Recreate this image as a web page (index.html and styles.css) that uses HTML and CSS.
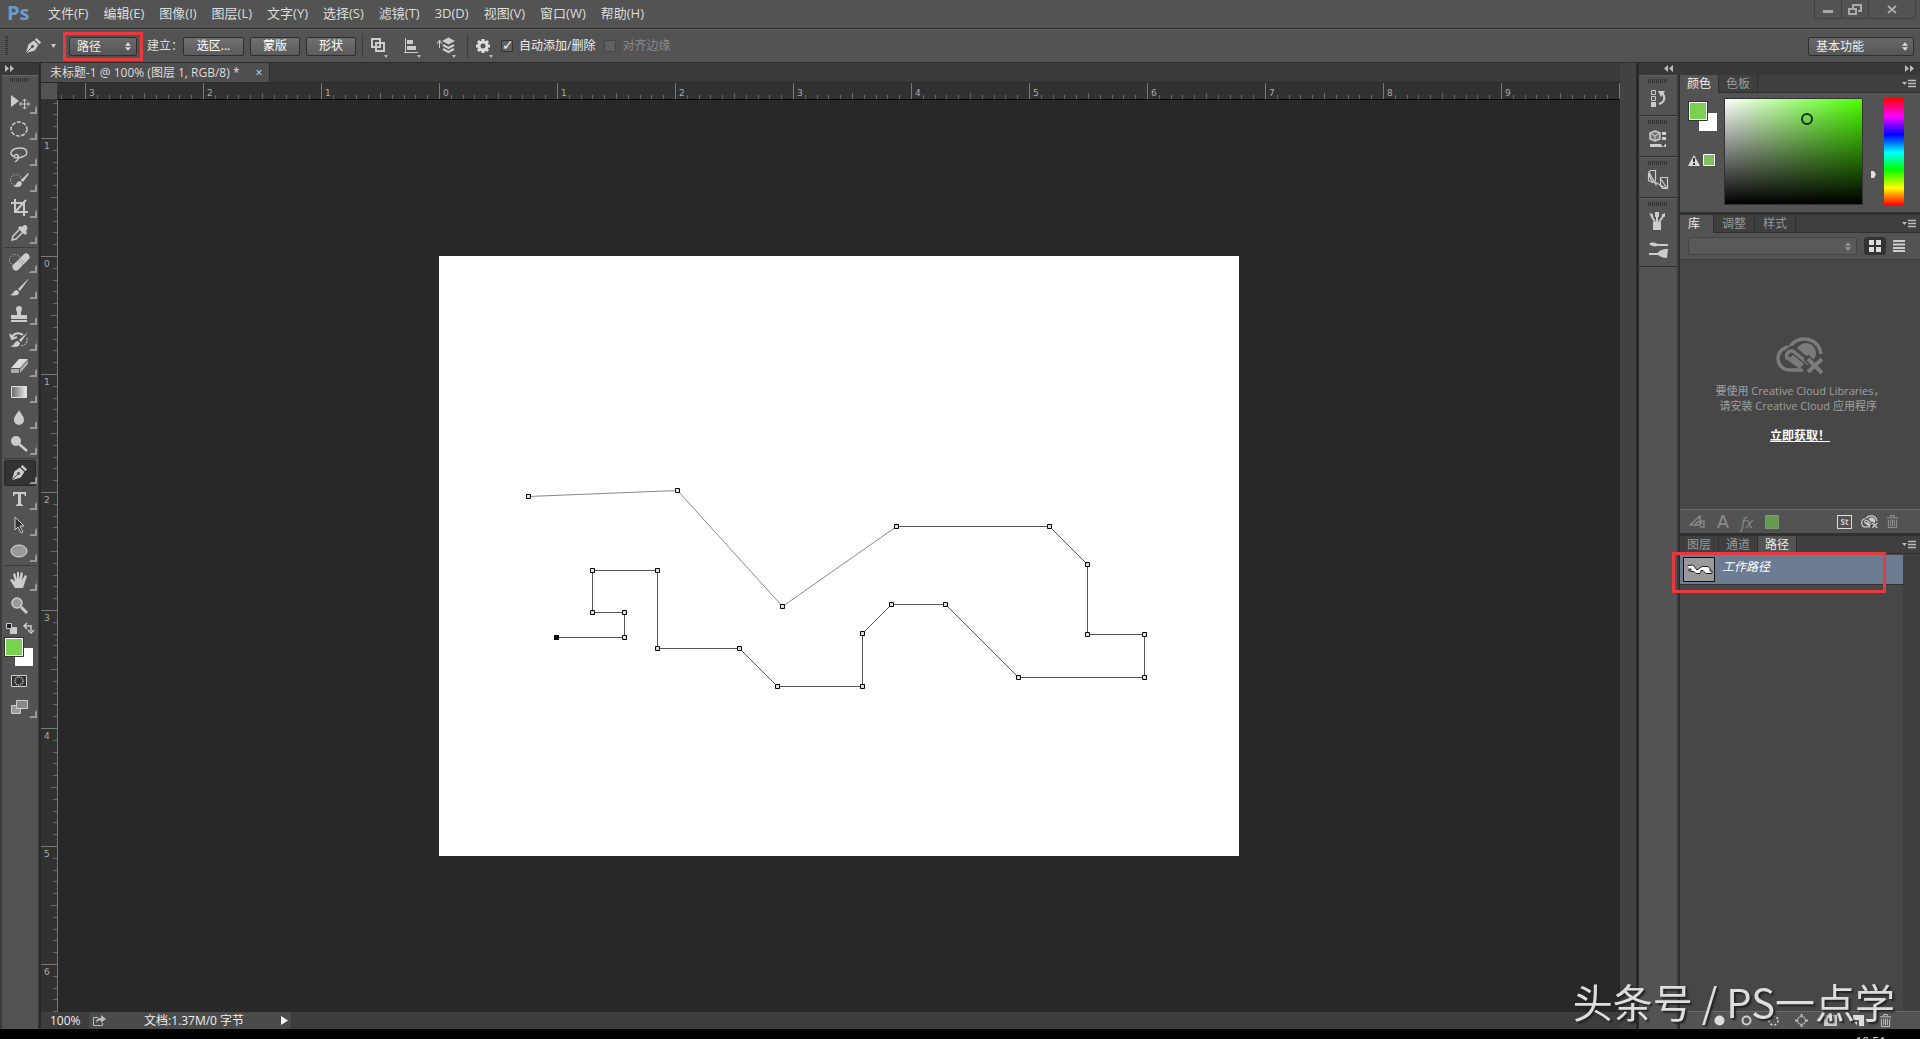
FILE: index.html
```html
<!DOCTYPE html>
<html lang="zh-CN">
<head>
<meta charset="utf-8">
<title>未标题-1 @ 100% (图层 1, RGB/8)</title>
<link rel="stylesheet" href="styles.css">
</head>
<body>
<svg class="defs" aria-hidden="true">
  <symbol id="updown" viewBox="0 0 7 10"><path d="M0 4 3.500 0 7 4zM0 6 3.500 10 7 6z" fill="currentColor"/></symbol>
  <symbol id="pen" viewBox="0 0 20 20"><path d="M2 18 5 8l6-4 5 5-4 6zM12 3l2-2 5 5-2 2z" fill="currentColor"/><path d="M2 18 9 11" stroke="#444" /><circle cx="9.500" cy="10.500" r="1.500" fill="#444"/></symbol>
  <symbol id="flyout" viewBox="0 0 14 10"><path d="M0 3h5L2.500 6z" fill="currentColor"/><path d="M6 1.500h8M6 4.500h8M6 7.500h8" stroke="currentColor" stroke-width="1.500"/></symbol>
  <symbol id="cloud" viewBox="0 0 48 38"><path d="M27 33H14C7 33 2 28 2 21.500S7 10 14 10c3-5 8-8 14-8 9 0 16 6 17 15" fill="none" stroke="currentColor" stroke-width="3.500"/><circle cx="30" cy="16" r="10" fill="currentColor"/><path d="m16 15 17 14" stroke="#474747" stroke-width="12" stroke-linecap="round"/><path d="M12 21 24 30M11.500 22a5 5 0 0 1 8-6L33 27" stroke="currentColor" stroke-width="3.500" fill="none"/><path d="m15 20 11 9" stroke="currentColor" stroke-width="6"/><path d="M30 36 46 20M30 20l16 16" stroke="#474747" stroke-width="7"/><path d="M32 35 46 22M32 22l14 14" stroke="currentColor" stroke-width="4"/></symbol>
  <symbol id="trash" viewBox="0 0 12 14"><path d="M0 3h12M4 2.500V.5h4v2" stroke="currentColor" fill="none"/><path d="M1.500 5v8.500h9V5M4 5v7M6 5v7M8 5v7" stroke="currentColor" fill="none"/></symbol>
</svg>

<header class="menubar">
  <strong class="logo">Ps</strong>
  <nav class="menus">
    <button>文件(F)</button><button>编辑(E)</button><button>图像(I)</button><button>图层(L)</button><button>文字(Y)</button><button>选择(S)</button><button>滤镜(T)</button><button>3D(D)</button><button>视图(V)</button><button>窗口(W)</button><button>帮助(H)</button>
  </nav>
  <div class="window-buttons">
    <button aria-label="最小化"><svg width="10" height="4"><path d="M0 1.500h10" stroke="#aaa" stroke-width="3"/></svg></button>
    <button aria-label="还原"><svg width="14" height="11" fill="none" stroke="#aaa" stroke-width="2"><path d="M5 4V1h8v6h-3M1 5h7v5H1z"/></svg></button>
    <button aria-label="关闭"><svg width="10" height="9"><path d="m1 1 8 7M9 1 1 8" stroke="#aaa" stroke-width="2"/></svg></button>
  </div>
</header>

<section class="options">
  <span class="grip-v"></span>
  <button class="current-tool" aria-label="钢笔工具"><svg width="18" height="18"><use href="#pen"/></svg><svg width="5" height="4"><path d="M0 0h5L2.500 4z" fill="currentColor"/></svg></button>
  <div class="mode-callout"><div class="select"><select aria-label="工具模式"><option>路径</option></select><svg width="6" height="9"><use href="#updown"/></svg></div></div>
  <span class="build">建立：</span>
  <button class="push wide">选区...</button>
  <button class="push">蒙版</button>
  <button class="push">形状</button>
  <span class="rule"></span>
  <div class="path-icons">
    <button aria-label="路径操作"><svg width="18" height="24" fill="none" stroke="#ccc" stroke-width="2"><path d="M2 5h8v8H2z"/><path d="M6 9h8v8H6z"/><path d="M14 21h4l-2 3z" fill="#bbb" stroke="none"/></svg></button>
    <button aria-label="路径对齐方式"><svg width="18" height="24"><path d="M2.500 4v14M1 18.500h14" stroke="#ccc"/><path d="M4 6h6v4H4zM4 12h9v4H4z" fill="#ccc"/><path d="M14 21h4l-2 3z" fill="#bbb"/></svg></button>
    <button aria-label="路径排列方式"><svg width="20" height="24"><path d="M3.500 7v7M1 10l2.500-4L6 10" stroke="#ccc" fill="none"/><path d="m6 7 6.500-3.500L19 7l-6.500 3.500z" fill="#ccc"/><path d="m7 11 5.500 3 5.500-3M7 15l5.500 3 5.500-3" stroke="#ccc" stroke-width="2" fill="none"/><path d="M16 21h4l-2 3z" fill="#bbb"/></svg></button>
  </div>
  <span class="rule"></span>
  <button class="gear" aria-label="设置"><svg width="18" height="24"><circle cx="8" cy="12" r="4" fill="none" stroke="#ddd" stroke-width="3"/><path d="M8 5v3M8 16v3M1 12h3M12 12h3M3 7l2 2M11 15l2 2M3 17l2-2M11 9l2-2" stroke="#ddd" stroke-width="3"/><path d="M14 21h4l-2 3z" fill="#bbb"/></svg></button>
  <label class="check"><input type="checkbox" checked>自动添加/删除</label>
  <label class="check off"><input type="checkbox" disabled>对齐边缘</label>
  <div class="select workspace-select"><select aria-label="工作区"><option>基本功能</option></select><svg width="6" height="9"><use href="#updown"/></svg></div>
</section>

<main class="workspace">
  <aside class="tools">
    <div class="strip"><svg width="10" height="7"><path d="M0 0l4 3.500L0 7zM5 0l4 3.500L5 7z" fill="#bbb"/></svg></div>
    <div class="tool-body">
      <span class="grip"></span>
      <div class="tool-group">
        <button aria-label="移动"><svg viewBox="0 0 26 22"><path d="M4 3v12l8-6z" fill="#ccc"/><path d="M17.500 7v10M12.500 12h10M15.500 9l2-2 2 2M15.500 15l2 2 2-2M14.500 10l-2 2 2 2M20.500 10l2 2-2 2" stroke="#ccc" fill="none"/></svg></button>
        <button aria-label="椭圆选框"><svg viewBox="0 0 26 22"><ellipse cx="12" cy="11" rx="8" ry="7" fill="none" stroke="#ccc" stroke-width="1.500" stroke-dasharray="4 1.500"/></svg></button>
        <button aria-label="套索"><svg viewBox="0 0 26 22"><path d="M8 13c-8-3-3-9 5-9s9 7 2 9-10 0-7-2 6 3 0 7" fill="none" stroke="#ccc" stroke-width="1.500"/></svg></button>
        <button aria-label="快速选择"><svg viewBox="0 0 26 22"><circle cx="9" cy="10" r="5.500" fill="none" stroke="#ccc" stroke-dasharray="1 1.500"/><path d="M21 3 14 10l2 2 6-8zM13 11c-4 0-3 5-7 5 5 2 9 1 9-3z" fill="#ccc"/></svg></button>
        <button aria-label="裁剪"><svg viewBox="0 0 26 22"><path d="M8 3v13h13M4 7h13v13M8 16 19 4" fill="none" stroke="#ccc" stroke-width="2"/></svg></button>
        <button aria-label="吸管"><svg viewBox="0 0 26 22"><path d="m5 18 1-4 7-7 3 3-7 7z" fill="none" stroke="#ccc" stroke-width="1.500"/><path d="m11 6 2-2 2 1c3-5 8 0 4 4l1 2-2 2z" fill="#ccc"/></svg></button>
      </div>
      <div class="tool-group">
        <button aria-label="污点修复画笔"><svg viewBox="0 0 26 22"><circle cx="8" cy="9" r="5.500" fill="none" stroke="#ccc" stroke-dasharray="1 1.500"/><path d="M9 16 19 6" stroke="#ccc" stroke-width="7" stroke-linecap="round"/><path d="M11 9l5 5M13 7l4 5" stroke="#777" stroke-dasharray="1 1"/></svg></button>
        <button aria-label="画笔"><svg viewBox="0 0 26 22"><path d="M21 2 11 12l2 2 8-11zM10 13c-4 0-3 4-7 5 5 1 9 1 9-3z" fill="#ccc"/></svg></button>
        <button aria-label="仿制图章"><svg viewBox="0 0 26 22"><path d="M12 3c4 0 3 4 2 6v3h6v4H4v-4h6V9C9 7 8 3 12 3zM4 17h16v2H4z" fill="#ccc"/></svg></button>
        <button aria-label="历史记录画笔"><svg viewBox="0 0 26 22"><path d="M21 3 12 11l2 2zM11 12c-4 0-3 5-8 5 5 2 10 1 10-3z" fill="#ccc"/><path d="M5 9c1-5 7-6 11-3M3 5l2 5 5-2" fill="none" stroke="#ccc" stroke-width="2"/><path d="M20 9c1 5-2 7-6 8" stroke="#ccc" fill="none" stroke-dasharray="2 1"/></svg></button>
        <button aria-label="橡皮擦"><svg viewBox="0 0 26 22"><path d="m4 13 8-9h9l-8 9z" fill="#ddd"/><path d="M4 14h8v4H4zM13 14l8-9v4l-8 9z" fill="#aaa"/></svg></button>
        <button aria-label="渐变"><svg viewBox="0 0 26 22"><defs><linearGradient id="tool-gradient"><stop stop-color="#666"/><stop offset="1" stop-color="#eee"/></linearGradient></defs><path d="M4.500 5.500h15v11h-15z" fill="url(#tool-gradient)" stroke="#ddd"/></svg></button>
        <button aria-label="模糊"><svg viewBox="0 0 26 22"><path d="M12 3c2 4 5 6 5 10a5 5 0 0 1-10 0c0-4 3-6 5-10z" fill="#ccc"/></svg></button>
        <button aria-label="减淡"><svg viewBox="0 0 26 22"><circle cx="9" cy="8" r="5" fill="#ccc"/><path d="m12 11 8 7" stroke="#ccc" stroke-width="2.500"/></svg></button>
      </div>
      <div class="tool-group">
        <button class="active" aria-label="钢笔"><svg viewBox="0 0 26 22"><use href="#pen" x="3" y="2" width="18" height="18"/></svg></button>
        <button aria-label="文字"><svg viewBox="0 0 26 22"><path d="M6 4h13v4h-1l-1-2h-3v10l2 1v1H9v-1l2-1V6H8L7 8H6z" fill="#ccc"/></svg></button>
        <button aria-label="路径选择"><svg viewBox="0 0 26 22"><path d="M8 3v13l3-3 3 6 2-1-3-6h4z" fill="#333" stroke="#ccc"/></svg></button>
        <button aria-label="椭圆"><svg viewBox="0 0 26 22"><ellipse cx="12" cy="11" rx="8" ry="6" fill="#999" stroke="#ddd"/></svg></button>
      </div>
      <div class="tool-group">
        <button aria-label="抓手"><svg viewBox="0 0 26 22"><path d="M8 19 3 11l2-1 3 3-2-8 2-1 2 6V3h2v7l2-7 2 1-1 7 3-5 2 1-4 12z" fill="#ccc"/></svg></button>
        <button class="plain" aria-label="缩放"><svg viewBox="0 0 26 22"><circle cx="10" cy="8" r="5" fill="#999" stroke="#ccc" stroke-width="1.500"/><path d="m14 12 6 6" stroke="#ccc" stroke-width="3"/></svg></button>
      </div>
      <svg class="tool-colors" viewBox="0 0 35 48"><path d="M7 7h7v7H7z" fill="#ccc"/><path d="M3.500 3.500h5v5h-5z" fill="#222" stroke="#ccc"/><path d="M22 6h6v5M24 3l-3 3 3 3M25 10l3 3 3-3" fill="none" stroke="#ccc" stroke-width="1.500"/><path d="M12 28h18v18H12z" fill="#fff"/><path d="M2.500 18.500h17v17h-17z" fill="#79d152" stroke="#fff"/><path d="M1.500 17.500h19v19h-19z" fill="none" stroke="#333"/></svg>
      <button class="plain" aria-label="快速蒙版"><svg viewBox="0 0 26 22"><path d="M4.500 5.500h15v11h-15z" fill="#333" stroke="#ccc"/><circle cx="12" cy="11" r="4" fill="none" stroke="#ccc" stroke-width="1.500" stroke-dasharray="1 1"/></svg></button>
      <button aria-label="屏幕模式"><svg viewBox="0 0 26 22"><path d="M4.500 9.500h9v8h-9z" fill="#999" stroke="#ccc"/><path d="M9.500 4.500h11v8h-11z" fill="#888" stroke="#ccc"/></svg></button>
    </div>
  </aside>

  <section class="document">
    <div class="doc-tabs"><div class="doc-tab"><span>未标题-1 @ 100% (图层 1, RGB/8) *</span><button aria-label="关闭文档">×</button></div></div>
    <div class="doc-grid">
      <div class="corner"></div>
      <svg class="ruler-h" aria-hidden="true">
        <defs><pattern id="ticks-h" x="27" width="118" height="16" patternUnits="userSpaceOnUse"><path d="M.5 0v16" stroke="#777"/><path d="M12.500 12v4M24.500 12v4M35.500 12v4M47.500 12v4M59.500 10v6M71.500 12v4M83.500 12v4M94.500 12v4M106.500 12v4" stroke="#666"/></pattern></defs>
        <rect width="100%" height="16" fill="url(#ticks-h)"/>
        <g><text x="31" y="13">3</text><text x="149" y="13">2</text><text x="267" y="13">1</text><text x="385" y="13">0</text><text x="503" y="13">1</text><text x="621" y="13">2</text><text x="739" y="13">3</text><text x="857" y="13">4</text><text x="975" y="13">5</text><text x="1093" y="13">6</text><text x="1211" y="13">7</text><text x="1329" y="13">8</text><text x="1447" y="13">9</text></g>
      </svg>
      <svg class="ruler-v" aria-hidden="true">
        <defs><pattern id="ticks-v" y="38" width="16" height="118" patternUnits="userSpaceOnUse"><path d="M0 .5h16" stroke="#777"/><path d="M12 12.500h4M12 24.500h4M12 35.500h4M12 47.500h4M10 59.500h6M12 71.500h4M12 83.500h4M12 94.500h4M12 106.500h4" stroke="#666"/></pattern></defs>
        <rect width="16" height="100%" fill="url(#ticks-v)"/>
        <g><text x="3" y="49">1</text><text x="3" y="167">0</text><text x="3" y="285">1</text><text x="3" y="403">2</text><text x="3" y="521">3</text><text x="3" y="639">4</text><text x="3" y="757">5</text><text x="3" y="875">6</text></g>
      </svg>
      <div class="canvas">
        <svg class="artboard" viewBox="439 256 800 600" role="img" aria-label="工作路径">
          <defs><marker id="anchor" markerWidth="5" markerHeight="5" refX="2.500" refY="2.500" markerUnits="userSpaceOnUse"><path d="M.5.5h4v4h-4z" fill="#ddd" stroke="#000"/></marker><marker id="anchor-on" markerWidth="5" markerHeight="5" refX="2.500" refY="2.500" markerUnits="userSpaceOnUse"><path d="M0 0h5v5H0z"/></marker></defs>
          <path d="M528.500 496.500 677.500 490.500 782.500 606.500 896.500 526.500" fill="none" stroke="#888"/>
          <path d="M896.500 526.500H1049.500L1087.500 564.500V634.500H1144.500V677.500H1018.500L945.500 604.500H891.500L862.500 633.500V686.500H777.500L739.500 648.500H657.500V570.500H592.500V612.500H624.500V637.500H556.500" fill="none" stroke="#555"/>
          <path d="M528.500 496.500 677.500 490.500 782.500 606.500 896.500 526.500H1049.500L1087.500 564.500V634.500H1144.500V677.500H1018.500L945.500 604.500H891.500L862.500 633.500V686.500H777.500L739.500 648.500H657.500V570.500H592.500V612.500H624.500V637.500H556.500" fill="none" marker-start="url(#anchor)" marker-mid="url(#anchor)" marker-end="url(#anchor-on)"/>
        </svg>
      </div>
    </div>
    <footer class="status"><span class="zoom">100%</span><div class="doc-info"><svg width="14" height="12"><path d="M6 2.500H1.500v8h9V8" fill="none" stroke="#bbb"/><path d="M4 8c0-4 2-5 5-5V0l5 4-5 4V6C7 5 5 6 4 8z" fill="#bbb"/></svg><span>文档:1.37M/0 字节</span><button aria-label="状态选项"><svg width="7" height="9"><path d="M0 0v9l7-4.500z" fill="#fff"/></svg></button></div></footer>
  </section>

  <div class="scrollbar"></div>

  <aside class="side">
    <div class="strip split"><svg width="10" height="7"><path d="M4 0 0 3.500 4 7zM9 0 5 3.500 9 7z" fill="#bbb"/></svg><svg width="10" height="7"><path d="M0 0l4 3.500L0 7zM5 0l4 3.500L5 7z" fill="#bbb"/></svg></div>
    <div class="side-body">
      <div class="dock">
        <div><span class="grip"></span><button aria-label="历史记录"><svg viewBox="0 0 22 20"><path d="M4.500 2.500h4v4h-4zM4.500 8.500h4v4h-4z" fill="none" stroke="#ccc"/><path d="M4 14h5v5H4z" fill="#ccc"/><path d="M12 16c6-2 7-7 3-11" fill="none" stroke="#ccc" stroke-width="2"/><path d="m11 3 7 0-4 6z" fill="#ccc"/></svg></button></div>
        <div><span class="grip"></span><button aria-label="属性"><svg viewBox="0 0 22 20"><path d="m8 2 5 2v6l-5 2-5-2V4z" fill="#777" stroke="#ccc" stroke-width="1.500"/><path d="m3 4 5 3 5-3M8 7v5" stroke="#ccc" fill="none"/><path d="M15 3h4v3h-4zM15 8h4v3h-4zM3 15h16v3H3z" fill="#ccc"/><path d="M14 15h4l-2 3z" fill="#444"/></svg></button></div>
        <div><span class="grip"></span><button aria-label="仿制源"><svg viewBox="0 0 22 20"><path d="M1.500 3.500l2-3h5v10l-3 2zM1.500 3.500v7l4 2M1.500 1.500l8 14M8 12l12 7M13.500 7.500h7v11h-5l-2-3zM13.500 8.500l6 9" fill="none" stroke="#ccc" stroke-width="1.200"/></svg></button></div>
        <div><span class="grip"></span><button aria-label="画笔预设"><svg viewBox="0 0 22 20"><path d="M6 11h8v8H6zM9 1h2v10H9z" fill="#ccc"/><path d="M4 4l4 7M17 4l-5 7" stroke="#ccc" stroke-width="2"/><path d="M2 2l4 1v4zM14 4l4-2v4zM8 1h4v5H8z" fill="#ccc"/></svg></button><button aria-label="画笔"><svg viewBox="0 0 22 20"><path d="M2 4c3-3 8-1 10 1-2 2-7 2-10-1zM11 4h10v2H11zM2 13h9v2H2zM10 14c3-5 8-5 11-5l-1 9c-3 0-7-1-10-4z" fill="#ccc"/></svg></button></div>
      </div>
      <div class="panels">
        <section class="panel">
          <div class="tabs"><button class="on">颜色</button><button>色板</button><svg width="14" height="10"><use href="#flyout"/></svg></div>
          <div class="color-body">
            <svg class="swatches" viewBox="0 0 32 70"><path d="M11 15h18v18H11z" fill="#fff"/><path d="M1.500 4.500h17v17h-17z" fill="#79d152" stroke="#fff"/><path d="M.5 3.500h19v19H.5z" fill="none" stroke="#333"/><path d="M6 57 0 68h12z" fill="#ddd"/><path d="M6 60v4M6 65v2" stroke="#333" stroke-width="2"/><path d="M15.500 56.500h11v11h-11z" fill="#7fbf5f" stroke="#fff"/></svg>
            <div class="spectrum"><span></span></div>
            <svg class="pointer" width="5" height="7"><path d="M0 0h3l2 3.500L3 7H0z" fill="#ddd"/></svg>
            <div class="hue"></div>
          </div>
        </section>
        <section class="panel library">
          <div class="tabs"><button class="on">库</button><button>调整</button><button>样式</button><svg width="14" height="10"><use href="#flyout"/></svg></div>
          <div class="lib-tools"><div class="select muted"><select aria-label="库"><option></option></select><svg width="6" height="9"><use href="#updown"/></svg></div><button class="pressed" aria-label="网格视图"><svg width="12" height="12"><path d="M0 0h5v5H0zM7 0h5v5H7zM0 7h5v5H0zM7 7h5v5H7z" fill="#ddd"/></svg></button><button aria-label="列表视图"><svg width="12" height="12"><path d="M0 1h12M0 4.500h12M0 8h12M0 11h12" stroke="#ccc" stroke-width="2"/></svg></button></div>
          <div class="lib-empty"><svg width="48" height="38"><use href="#cloud"/></svg><p>要使用 Creative Cloud Libraries，<br><span>请安装 Creative Cloud 应用程序</span></p><a href="#get">立即获取！</a></div>
          <div class="lib-foot">
            <svg width="16" height="14"><path d="M1 10 11 1v9zM7 11a3 3 0 0 1 6-2M10 6h5v6h-4" fill="none" stroke="#888" stroke-width="1.500"/></svg><svg width="12" height="13"><path d="M1 13 5.500 1h1L11 13M3 9h6" fill="none" stroke="#888" stroke-width="2"/></svg><em>fx</em><i></i>
            <div class="lib-actions"><b>St</b><svg width="17" height="14"><use href="#cloud"/></svg><svg class="dim" width="11" height="13"><use href="#trash"/></svg></div>
          </div>
        </section>
        <section class="panel paths">
          <div class="tabs"><button>图层</button><button>通道</button><button class="on">路径</button><svg width="14" height="10"><use href="#flyout"/></svg></div>
          <div class="path-list"><div class="path-row"><svg width="32" height="25"><path d="M.5.500h31v24H.5z" fill="#999" stroke="#111"/><path d="M4.500 8.500 10 8l4 5 5-3.500h6l2 1.500v3h2v2.500h-6l-3-3h-2l-1 3h-4l-2-2h-3V12H6v2h1.500" fill="#fff" stroke="#222"/></svg><span>工作路径</span></div></div>
          <div class="path-foot">
            <svg width="11" height="11"><circle cx="5.500" cy="5.500" r="5" fill="#ddd"/></svg><svg width="11" height="11"><circle cx="5.500" cy="5.500" r="4" fill="none" stroke="#ccc" stroke-width="2"/></svg><svg width="11" height="11"><circle cx="5.500" cy="5.500" r="4.500" fill="none" stroke="#ddd" stroke-width="1.500" stroke-dasharray="2 2"/></svg><svg width="13" height="13"><circle cx="6.500" cy="6.500" r="4" fill="none" stroke="#bbb"/><path d="M6.500 0v3M6.500 10v3M0 6.500h3M10 6.500h3" stroke="#bbb" stroke-width="2"/></svg><svg width="13" height="11"><path d="M0 0h13v11H0z" fill="#ccc"/><circle cx="6.500" cy="5.500" r="3" fill="#444"/></svg><svg width="11" height="11"><path d="M0 0h11v11H6V5H0z" fill="#ddd"/><path d="m1 7 3 3V7z" fill="#ddd"/></svg><svg width="11" height="13"><use href="#trash"/></svg>
          </div>
          <div class="path-callout"></div>
        </section>
      </div>
    </div>
  </aside>
</main>
<footer class="taskbar"><time>10:51</time></footer>
<div class="watermark">头条号 / PS一点学</div>
</body>
</html>
```
FILE: styles.css
```css
* { box-sizing: border-box; }
body { margin: 0; height: 100vh; display: flex; flex-direction: column; overflow: hidden; background: #535353; color: #ddd; font: 12px/16px "Open Sans", "Noto Sans CJK SC", sans-serif; }
button, select, input { font: inherit; color: inherit; margin: 0; padding: 0; border: 0; background: none; border-radius: 0; }
svg { display: block; flex: none; }
.defs { position: absolute; width: 0; height: 0; }

.menubar { display: flex; height: 29px; flex: none; border-bottom: 1px solid #2e2e2e; padding-left: 7px; }
.logo { width: 41px; font: bold 20px/26px "Open Sans", sans-serif; color: #6d9bc9; }
.menus { display: flex; gap: 15px; font-size: 13px; line-height: 26px; align-items: flex-start; }
.window-buttons { display: flex; margin-left: auto; margin-right: 4px; height: 19px; border: 1px solid #424242; border-top: 0; border-radius: 0 0 3px 3px; }
.window-buttons button { width: 27px; display: grid; place-items: center; border-right: 1px solid #424242; }
.window-buttons button:first-child { padding-top: 6px; }
.window-buttons button:last-child { width: 46px; border: 0; }

.options { display: flex; align-items: center; height: 34px; flex: none; border-top: 1px solid #626262; border-bottom: 1px solid #2e2e2e; padding: 0 6px 0 5px; }
.grip-v { width: 3px; height: 20px; background: repeating-linear-gradient(#333 0 1px, transparent 1px 2px); }
.current-tool { display: flex; align-items: center; gap: 9px; margin: 0 7px 0 16px; color: #ccc; }
.mode-callout { border: 3px solid #e83a3e; padding: 2px; width: 80px; height: 29px; }
.select { display: grid; height: 19px; align-items: center; background: linear-gradient(#686868, #565656); border: 1px solid #2e2e2e; border-radius: 2px; }
.select select { grid-area: 1 / 1; appearance: none; width: 100%; padding-left: 7px; color: #eee; line-height: 17px; }
.select svg { grid-area: 1 / 1; justify-self: end; margin-right: 5px; pointer-events: none; }
.mode-callout .select { width: 68px; margin-left: 1px; }
.build { width: 40px; padding-left: 4px; white-space: nowrap; }
.push { width: 50px; height: 19px; margin-right: 6px; background: linear-gradient(#707070, #5c5c5c); border: 1px solid #2e2e2e; border-radius: 2px; line-height: 16px; color: #fff; }
.push.wide { width: 61px; }
.rule { width: 1px; height: 24px; background: #3c3c3c; }
.path-icons { display: flex; gap: 15px; margin: 0 11px 0 7px; }
.gear { margin: 0 8px 0 7px; }
.check { display: flex; align-items: center; gap: 6px; margin-right: 9px; color: #eee; white-space: nowrap; }
.check input { appearance: none; width: 12px; height: 12px; border: 1px solid #333; border-radius: 2px; background: #606060; }
.check input:checked::before { content: "✓"; display: block; font: bold 14px/8px "DejaVu Sans", sans-serif; color: #eee; }
.check.off { color: #8a8a8a; }
.check.off input { border-color: #454545; }
.workspace-select { width: 106px; margin-left: auto; }

.workspace { display: flex; flex: 1; min-height: 0; background: #3a3a3a; }
.strip { height: 12px; background: #383838; padding: 2px 5px; flex: none; }
.strip.split { display: flex; justify-content: space-between; padding: 2px 5px 2px 25px; }
.tools { width: 41px; display: flex; flex-direction: column; border-right: 2px solid #292929; }
.tool-body { flex: 1; margin: 0 1px 0 2px; background: #535353; display: flex; flex-direction: column; align-items: center; border-top: 1px solid #666; }
.grip { display: block; width: 20px; height: 4px; flex: none; background: repeating-linear-gradient(90deg, #333 0 1px, transparent 1px 2px); }
.tool-body > .grip { margin: 2px 0 8px; }
.tool-group { display: grid; padding-bottom: 1px; margin-bottom: 1px; border-bottom: 1px solid #3c3c3c; }
.tool-group:nth-of-type(4) { border: 0; margin: 0; }
.tool-body button { width: 32px; height: 26px; display: grid; grid-template-columns: 22px 4px; place-content: center; align-items: end; border: 1px solid transparent; color: #ccc; }
.tool-body button svg { width: 26px; height: 22px; }
.tool-body button::after { content: ""; border: solid transparent; border-width: 2px; border-right-color: #999; border-bottom-color: #999; width: 4px; height: 4px; }
.tool-body button.plain::after { visibility: hidden; }
.tool-body button.active { background: #333; border-color: #262626; border-radius: 2px; }
.tool-colors { width: 35px; height: 48px; }

.document { flex: 1; min-width: 0; display: flex; flex-direction: column; }
.doc-tabs { height: 20px; flex: none; background: #3a3a3a; border-bottom: 1px solid #2a2a2a; display: flex; }
.doc-tab { display: flex; align-items: center; gap: 16px; padding: 0 7px 0 9px; background: #4f4f4f; border-right: 1px solid #2a2a2a; white-space: nowrap; }
.doc-tab button { font-size: 12px; line-height: 16px; }
.doc-grid { flex: 1; min-height: 0; display: grid; grid-template: 17px 1fr / 17px 1fr; }
.corner { background: #535353; border: solid #333; border-width: 0 1px 1px 0; }
.ruler-h { width: 100%; height: 17px; background: #313131; border-bottom: 1px solid #050505; }
.ruler-v { width: 17px; height: 100%; background: #313131; border-right: 1px solid #777; }
.ruler-h text, .ruler-v text { font: 9px "DejaVu Sans", sans-serif; fill: #aaa; }
.canvas { background: #282828; display: grid; place-items: center; min-height: 0; overflow: hidden; }
.artboard { width: 800px; height: 600px; background: #fff; }
.status { display: flex; height: 17px; flex: none; background: #3d3d3d; line-height: 17px; color: #eee; }
.zoom { width: 48px; padding-left: 9px; }
.doc-info { display: flex; align-items: center; width: 202px; padding: 0 3px; background: #4b4b4b; }
.doc-info span { margin: 0 auto 0 38px; white-space: nowrap; }
.scrollbar { width: 16px; background: #424242; }

.side { width: 284px; display: flex; flex-direction: column; border-left: 3px solid #292929; }
.side-body { display: flex; flex: 1; min-height: 0; }
.dock { width: 38px; background: #535353; }
.dock > div { display: flex; flex-direction: column; align-items: center; border-bottom: 1px solid #303030; border-top: 1px solid #606060; padding: 3px 0 2px; }
.dock button { width: 36px; height: 30px; display: grid; place-items: center; }
.dock button + button { height: 28px; }
.dock svg { width: 22px; height: 20px; }
.panels { flex: 1; min-width: 0; margin-left: 2px; border-left: 1px solid #292929; display: flex; flex-direction: column; }
.panel { background: #535353; border-bottom: 3px solid #303030; }
.tabs { display: flex; height: 18px; flex: none; background: #3f3f3f; border-bottom: 1px solid #303030; }
.tabs button { padding: 0 7px; line-height: 16px; color: #999; border-right: 1px solid #303030; }
.tabs .on { background: #535353; color: #eee; height: 18px; }
.tabs svg { margin: 4px 4px 0 auto; color: #bbb; }
.color-body { display: grid; grid-template-columns: 36px 1fr 21px 20px; height: 119px; padding: 5px 16px 7px 8px; }
.swatches { width: 32px; height: 70px; }
.spectrum { border: 1px solid #333; background: linear-gradient(transparent, #000), linear-gradient(90deg, #fff, #4cff00); }
.spectrum span { display: block; width: 12px; height: 12px; margin: 14px 0 0 76px; border: 2px solid #0a3a0a; border-radius: 50%; }
.pointer { margin: 73px 0 0 8px; }
.hue { background: linear-gradient(red, #f0f 17%, #00f 34%, #0ff 51%, #0f0 67%, #ff0 84%, red); }
.library { height: 321px; display: flex; flex-direction: column; }
.library .tabs button { padding: 0 8px; }
.library .tabs .on { padding-right: 13px; }
.lib-tools { display: flex; align-items: center; height: 27px; flex: none; padding: 0 10px 0 8px; border-bottom: 1px solid #3b3b3b; }
.select.muted { flex: 1; margin-right: 7px; height: 18px; background: #595959; border-color: #444; color: #999; }
.lib-tools button { width: 22px; height: 18px; display: grid; place-items: center; }
.lib-tools .pressed { background: #333; border-radius: 3px; }
.lib-tools button:last-child { margin-left: 2px; }
.lib-empty { flex: 1; background: #474747; border-bottom: 1px solid #6a6a6a; display: flex; flex-direction: column; align-items: center; padding-top: 77px; color: #a0a0a0; font-size: 11px; line-height: 15px; }
.lib-empty svg { color: #7b7b7b; }
.lib-empty p { margin: 8px 0 15px; white-space: nowrap; }
.lib-empty p span { padding-left: 4px; }
.lib-empty a { color: #fff; font-weight: bold; font-size: 12px; }
.lib-foot { height: 23px; flex: none; display: flex; align-items: center; padding: 0 22px 0 9px; color: #888; gap: 12px; }
.lib-foot em { font: italic 15px/16px "Open Sans", sans-serif; }
.lib-foot i { width: 14px; height: 14px; background: #669b50; border: 1px solid #7a9a70; }
.lib-actions { display: flex; align-items: center; gap: 9px; margin-left: auto; color: #ccc; }
.lib-actions b { width: 15px; height: 14px; border: 1px solid #ddd; font-size: 8px; line-height: 12px; text-align: center; }
.lib-actions .dim { color: #999; }
.paths { flex: 1; min-height: 0; border: 0; display: flex; flex-direction: column; position: relative; }
.path-list { flex: 1; background: #474747; border-right: 17px solid #3f3f3f; padding-top: 1px; }
.path-row { display: flex; gap: 7px; height: 30px; padding: 2px 3px; background: #6b7c93; border-bottom: 1px solid #333; }
.path-row span { font-style: italic; line-height: 20px; color: #fff; }
.path-foot { height: 18px; flex: none; display: flex; align-items: center; justify-content: flex-end; gap: 16px; padding-right: 29px; border-top: 1px solid #6a6a6a; color: #ccc; }
.path-callout { position: absolute; left: -8px; top: 16px; width: 214px; height: 41px; border: 3px solid #e83a3e; }
.taskbar { height: 10px; flex: none; background: #000; overflow: hidden; display: flex; justify-content: flex-end; padding: 5px 34px 0 0; }
.watermark { position: fixed; right: 25px; bottom: 8px; font: 40px/60px "Noto Sans CJK SC", sans-serif; color: #ddd; text-shadow: 2px 2px 2px #222; white-space: nowrap; }
```
